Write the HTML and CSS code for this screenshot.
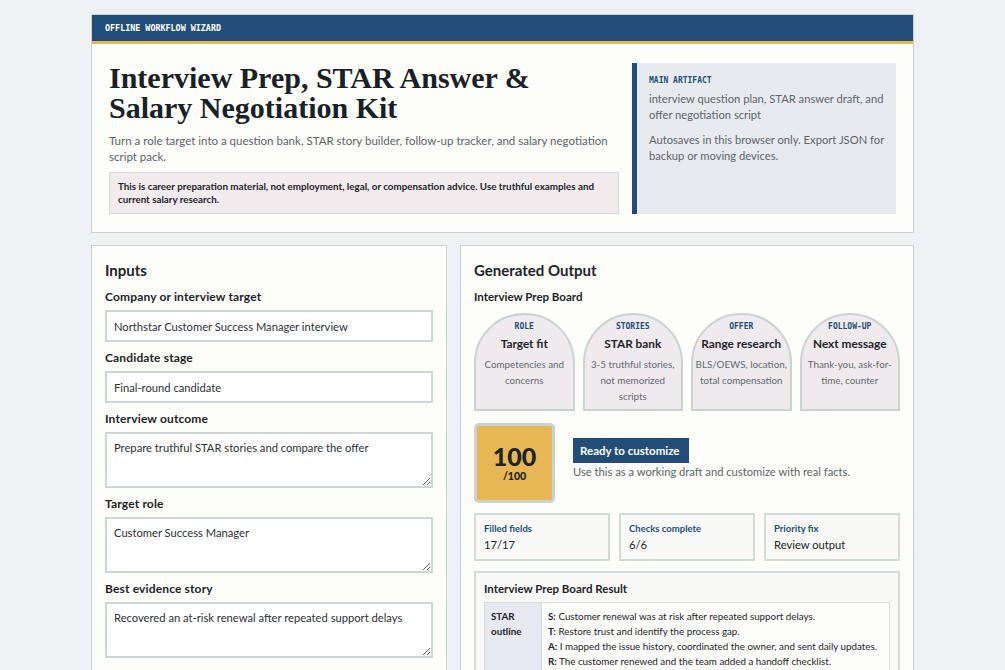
FILE: index.html
```html
<!DOCTYPE html>
<html lang="en">
<head>
    <meta charset="UTF-8">
    <meta name="viewport" content="width=device-width, initial-scale=1.0">
    <title>Interview Prep, STAR Answer &amp; Salary Negotiation Kit</title>
    <link rel="stylesheet" href="styles.css">
</head>
<body>
    <div class="page">
        <!-- Top card with title and notes -->
        <header class="hero-card">
            <div class="topbar">OFFLINE WORKFLOW WIZARD</div>
            <div class="hero">
                <div class="hero-main">
                    <h1>Interview Prep, STAR Answer &amp; Salary Negotiation Kit</h1>
                    <p class="lead">Turn a role target into a question bank, STAR story builder, follow-up tracker, and salary negotiation script pack.</p>
                    <div class="notice">This is career preparation material, not employment, legal, or compensation advice. Use truthful examples and current salary research.</div>
                </div>
                <aside class="artifact">
                    <div class="eyebrow">MAIN ARTIFACT</div>
                    <p>interview question plan, STAR answer draft, and offer negotiation script</p>
                    <p>Autosaves in this browser only. Export JSON for backup or moving devices.</p>
                </aside>
            </div>
        </header>

        <div class="columns">
            <!-- Form fields -->
            <section class="panel">
                <h2>Inputs</h2>
                <label class="field">
                    <span>Company or interview target</span>
                    <input type="text" value="Northstar Customer Success Manager interview">
                </label>
                <label class="field">
                    <span>Candidate stage</span>
                    <input type="text" value="Final-round candidate">
                </label>
                <label class="field">
                    <span>Interview outcome</span>
                    <textarea>Prepare truthful STAR stories and compare the offer</textarea>
                </label>
                <label class="field">
                    <span>Target role</span>
                    <textarea>Customer Success Manager</textarea>
                </label>
                <label class="field">
                    <span>Best evidence story</span>
                    <textarea>Recovered an at-risk renewal after repeated support delays</textarea>
                </label>
            </section>

            <!-- Output board -->
            <section class="panel">
                <h2>Generated Output</h2>
                <h3>Interview Prep Board</h3>
                <div class="arches">
                    <div class="arch">
                        <div class="eyebrow">ROLE</div>
                        <strong>Target fit</strong>
                        <p>Competencies and concerns</p>
                    </div>
                    <div class="arch">
                        <div class="eyebrow">STORIES</div>
                        <strong>STAR bank</strong>
                        <p>3-5 truthful stories, not memorized scripts</p>
                    </div>
                    <div class="arch">
                        <div class="eyebrow">OFFER</div>
                        <strong>Range research</strong>
                        <p>BLS/OEWS, location, total compensation</p>
                    </div>
                    <div class="arch">
                        <div class="eyebrow">FOLLOW-UP</div>
                        <strong>Next message</strong>
                        <p>Thank-you, ask-for-time, counter</p>
                    </div>
                </div>

                <div class="score-row">
                    <div class="score">
                        <b>100</b>
                        <small>/100</small>
                    </div>
                    <div class="status">
                        <span class="badge">Ready to customize</span>
                        <p>Use this as a working draft and customize with real facts.</p>
                    </div>
                </div>

                <div class="metrics">
                    <div class="metric">
                        <span>Filled fields</span>
                        <div>17/17</div>
                    </div>
                    <div class="metric">
                        <span>Checks complete</span>
                        <div>6/6</div>
                    </div>
                    <div class="metric">
                        <span>Priority fix</span>
                        <div>Review output</div>
                    </div>
                </div>

                <div class="result">
                    <h3>Interview Prep Board Result</h3>
                    <table>
                        <tr>
                            <th>STAR outline</th>
                            <td>
                                <b>S:</b> Customer renewal was at risk after repeated support delays.<br>
                                <b>T:</b> Restore trust and identify the process gap.<br>
                                <b>A:</b> I mapped the issue history, coordinated the owner, and sent daily updates.<br>
                                <b>R:</b> The customer renewed and the team added a handoff checklist.
                            </td>
                        </tr>
                    </table>
                </div>
            </section>
        </div>
    </div>
</body>
</html>
```

FILE: styles.css
```css
/* Base page */
body {
    margin: 0;
    background-color: #eef2f5;
    color: #1d2428;
    font-family: Lato, "Open Sans", sans-serif;
}

.page {
    max-width: 823px;
    margin: 0 auto;
    padding-top: 14px;
}

/* Header card */
.hero-card {
    background-color: #fdfdf9;
    border: 1px solid #c9d3cf;
}

.topbar {
    background-color: #214d78;
    color: #fff;
    font-family: "DejaVu Sans Mono", monospace;
    font-weight: bold;
    font-size: 8.4px;
    padding: 0 13px;
    height: 26px;
    line-height: 27px;
    border-bottom: 3px solid #e6b655;
}

.hero {
    display: grid;
    grid-template-columns: 1fr 264px;
    gap: 13px;
    padding: 19px 17px 18px 17px;
}

h1 {
    font-family: "Liberation Serif", serif;
    font-size: 30px;
    line-height: 30px;
    max-width: 470px;
    margin: 0 0 10px 0;
    color: #192126;
}

.lead {
    font-size: 11.5px;
    line-height: 16px;
    color: #5d6468;
    margin: 0 0 7px 0;
}

.notice {
    background-color: #f1ebee;
    border: 1px solid #d6dbd8;
    padding: 7px 8px;
    font-size: 9.8px;
    font-weight: bold;
    line-height: 13px;
    color: #1d2428;
}

.artifact {
    background-color: #e7ebf0;
    border-left: 5px solid #214d78;
    padding: 12px 6px 10px 12px;
}

.artifact p {
    font-size: 11.2px;
    line-height: 16px;
    color: #5d6468;
    margin: 4px 0 9px 0;
}

.eyebrow {
    font-family: "DejaVu Sans Mono", monospace;
    font-weight: bold;
    font-size: 8px;
    line-height: 12px;
    color: #214d78;
}

/* Two columns */
.columns {
    display: grid;
    grid-template-columns: 356px 1fr;
    gap: 13px;
    margin-top: 12px;
}

.panel {
    background-color: #fdfdf9;
    border: 1px solid #c9d3cf;
    padding: 14px 13px;
}

h2 {
    font-size: 15px;
    line-height: 20px;
    margin: 0 0 9px 0;
}

h3 {
    font-size: 11.5px;
    line-height: 16px;
    margin: 0 0 8px 0;
}

.field {
    display: block;
    margin-bottom: 8px;
}

.field span {
    display: block;
    font-size: 12px;
    letter-spacing: 0.15px;
    font-weight: bold;
    line-height: 16px;
    margin-bottom: 5px;
}

input[type="text"], textarea {
    display: block;
    box-sizing: border-box;
    width: 100%;
    font-family: inherit;
    font-size: 11.2px;
    color: #2b3236;
    background-color: #fff;
    border: 2px solid #ccd6d2;
    padding: 0 7px;
    margin: 0;
}

input[type="text"] {
    height: 32px;
}

textarea {
    height: 56px;
    padding-top: 7px;
    resize: vertical;
    margin-bottom: 6px;
}

/* Arch cards */
.arches {
    display: grid;
    grid-template-columns: repeat(4, 1fr);
    gap: 8px;
}

.arch {
    height: 98px;
    box-sizing: border-box;
    background-color: #efeaed;
    border: 2px solid #c9d3cf;
    border-radius: 50px 50px 0 0;
    text-align: center;
    padding: 6px 2px 0 2px;
}

.arch strong {
    display: block;
    font-size: 11.8px;
    line-height: 18px;
    margin: 2px 0 3px 0;
}

.arch p {
    font-size: 9.8px;
    line-height: 16px;
    color: #62696d;
    margin: 0;
}

/* Score */
.score-row {
    display: flex;
    gap: 18px;
    margin-top: 12px;
}

.score {
    width: 81px;
    height: 80px;
    box-sizing: border-box;
    background-color: #e7b655;
    border: 3px solid #c9d3cf;
    border-radius: 5px;
    display: flex;
    flex-direction: column;
    align-items: center;
    justify-content: center;
}

.score b {
    font-size: 25px;
    font-weight: 900;
    line-height: 26px;
}

.score small {
    font-size: 10.5px;
    font-weight: 900;
    line-height: 14px;
}

.status {
    padding-top: 15px;
}

.badge {
    display: inline-block;
    background-color: #214d78;
    color: #fff;
    font-size: 11.5px;
    font-weight: bold;
    line-height: 25px;
    padding: 0 9px 0 7px;
}

.status p {
    font-size: 11.2px;
    line-height: 16px;
    color: #5d6468;
    margin: 1px 0 0 0;
}

/* Metrics */
.metrics {
    display: grid;
    grid-template-columns: repeat(3, 1fr);
    gap: 9px;
    margin-top: 10px;
}

.metric {
    background-color: #f9faf7;
    border: 2px solid #d3dbd7;
    padding: 7px 8px;
    height: 48px;
    box-sizing: border-box;
}

.metric span {
    display: block;
    font-size: 9.5px;
    font-weight: bold;
    color: #214d78;
    line-height: 14px;
}

.metric div {
    font-size: 11.2px;
    line-height: 17px;
}

/* Result table */
.result {
    background-color: #f9faf7;
    border: 2px solid #d3dbd7;
    margin-top: 10px;
    padding: 8px;
}

.result h3 {
    margin-bottom: 5px;
}

table {
    border-collapse: collapse;
    width: 100%;
    background-color: #fdfdfb;
}

th, td {
    border: 1px solid #d8ddda;
    vertical-align: top;
    text-align: left;
    font-size: 9.8px;
    line-height: 15px;
    padding: 6px 4px 6px 6px;
}

th {
    background-color: #e6e9ef;
    width: 46px;
}
```
